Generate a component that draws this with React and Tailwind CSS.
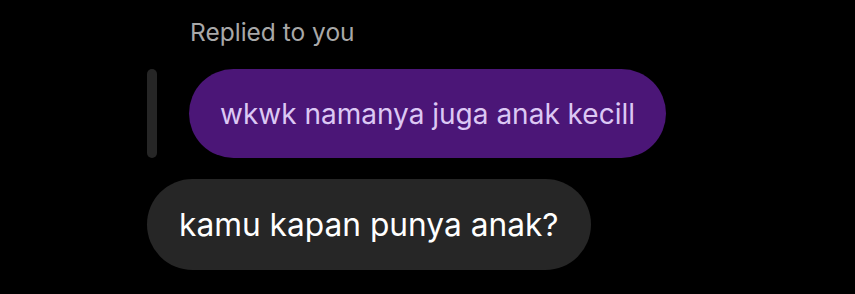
export default function App() {
  return (
    <div className="w-[855px] h-[294px] bg-black overflow-hidden font-['Inter',sans-serif]">
      <div className="flex flex-col items-start pl-[147px] pt-[16px]">
        <div className="ml-[43px] h-[32px] leading-[32px] text-[24.5px] text-[#a8a8a8]">Replied to you</div>
        <div className="mt-[21px] flex items-stretch gap-[32px]">
          <div className="w-[10px] rounded-full bg-[#262626]" />
          <div className="h-[89px] flex items-center rounded-full bg-[#4b1677] px-[31px] text-[28px] text-[#dcc8f4]">
            wkwk namanya juga anak kecill
          </div>
        </div>
        <div className="mt-[21px] h-[91px] flex items-center rounded-full bg-[#262626] px-[32px] text-[31.7px] text-white">
          kamu kapan punya anak?
        </div>
      </div>
    </div>
  );
}
